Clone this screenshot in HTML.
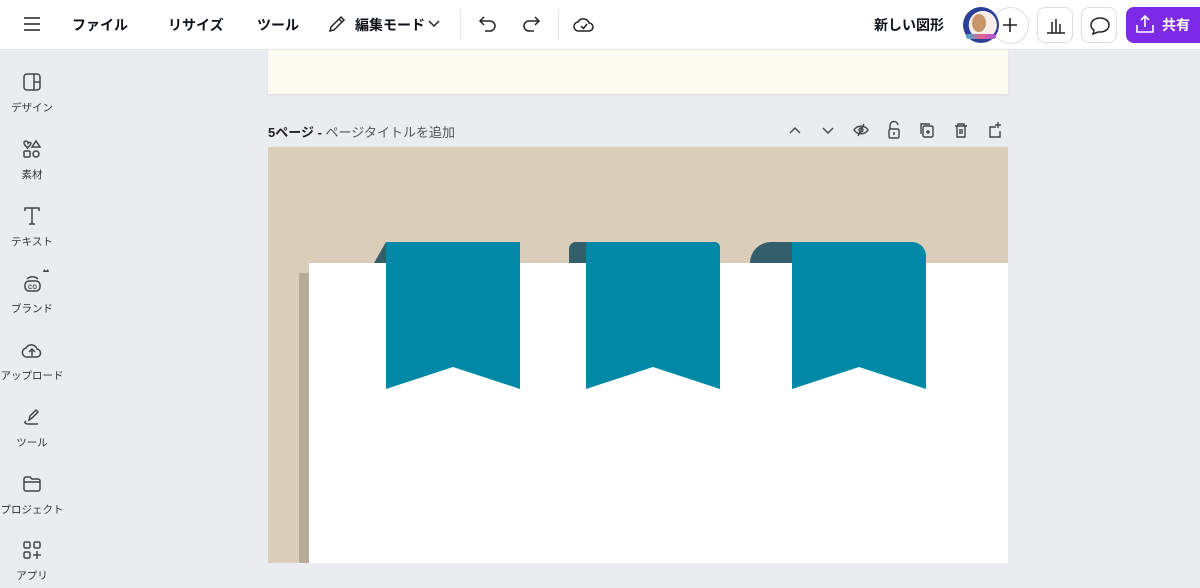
<!DOCTYPE html>
<html><head><meta charset="utf-8"><style>
*{margin:0;padding:0;box-sizing:border-box}
body{width:1200px;height:588px;overflow:hidden;background:#ebecf0;font-family:"Liberation Sans","Noto Sans CJK JP",sans-serif;position:relative;color:#0e1318}
.top{position:absolute;left:0;top:0;width:1200px;height:50px;background:#fff;border-bottom:1px solid #e3e4e8}
.t{position:absolute;top:15px;font-size:14px;font-weight:bold}
.side{position:absolute;left:0;top:50px;width:64px}
.si{position:absolute;left:0;width:64px;text-align:center;font-size:10.5px;color:#333}
.si svg{display:block;margin:0 auto 9px}
.btn{position:absolute;top:7px;width:36px;height:36px;border:1px solid #dcdde1;border-radius:8px;background:#fff}
svg{overflow:visible}
</style></head><body>
<div class="top">
<svg style="position:absolute;left:24px;top:17px" width="16" height="14"><path d="M0 1H16M0 7H16M0 13H16" stroke="#222" stroke-width="1.6"/></svg>
<div class="t" style="left:72px">ファイル</div>
<div class="t" style="left:168px">リサイズ</div>
<div class="t" style="left:257px">ツール</div>
<svg style="position:absolute;left:328px;top:15px" width="18" height="18" fill="none" stroke="#222" stroke-width="1.5"><path d="M2 16L3 12L13 2L16 5L6 15Z M11 4L14 7"/></svg>
<div class="t" style="left:355px">編集モード</div>
<svg style="position:absolute;left:429px;top:21px" width="10" height="6" fill="none" stroke="#222" stroke-width="1.5"><path d="M0 0L5 5L10 0"/></svg>
<div style="position:absolute;left:460px;top:10px;width:1px;height:30px;background:#e3e4e8"></div>
<svg style="position:absolute;left:479px;top:16px" width="18" height="16" fill="none" stroke="#222" stroke-width="1.5"><path d="M5 1L1 5L5 9M1 5H11A5 5 0 0 1 11 15H6"/></svg>
<svg style="position:absolute;left:522px;top:16px" width="18" height="16" fill="none" stroke="#222" stroke-width="1.5"><path d="M13 1L17 5L13 9M17 5H7A5 5 0 0 0 7 15H12"/></svg>
<div style="position:absolute;left:558px;top:10px;width:1px;height:30px;background:#e3e4e8"></div>
<svg style="position:absolute;left:574px;top:15px" width="20" height="18" fill="none" stroke="#222" stroke-width="1.5"><path d="M5 16H15A4 4 0 0 0 15 8A6 6 0 0 0 4 7A4.5 4.5 0 0 0 5 16Z M7 11L9.5 13.5L13 9"/></svg>
<div class="t" style="left:874px">新しい図形</div>
<div style="position:absolute;left:992px;top:7px;width:37px;height:37px;border-radius:50%;border:1px solid #dcdde1;background:#fff"></div>
<svg style="position:absolute;left:1003px;top:18px" width="14" height="14"><path d="M7 0V14M0 7H14" stroke="#222" stroke-width="1.6"/></svg>
<div style="position:absolute;left:963px;top:7px;width:36px;height:36px;border-radius:50%;background:radial-gradient(circle at 55% 50%,#f6ede6 0 52%,#2a3f95 53%)"></div>
<div style="position:absolute;left:972px;top:14px;width:14px;height:18px;border-radius:50%;background:#c8956b"></div>
<div style="position:absolute;left:966px;top:34px;width:30px;height:5px;border-radius:3px;background:linear-gradient(90deg,#34b0d6,#e8608c,#a45ad8)"></div>
<div class="btn" style="left:1037px"><svg style="position:absolute;left:9px;top:10px" width="18" height="16" fill="none" stroke="#222" stroke-width="1.5"><path d="M0 15H18M5 4V15M9 1V15M13 6V15"/></svg></div>
<div class="btn" style="left:1081px"><svg style="position:absolute;left:8px;top:9px" width="20" height="18" fill="none" stroke="#222" stroke-width="1.5"><path d="M10 1C5 1 1 4 1 8C1 10 2 12 4 13L3 17L8 15C9 15 9.5 15 10 15C15 15 19 12 19 8C19 4 15 1 10 1Z"/></svg></div>
<div style="position:absolute;left:1126px;top:7px;width:74px;height:36px;border-radius:8px 0 0 8px;background:#7d2ae8"></div>
<svg style="position:absolute;left:1136px;top:15px" width="18" height="18" fill="none" stroke="#fff" stroke-width="1.6"><path d="M9 12V1M5 5L9 1L13 5M1 10V17H17V10"/></svg>
<div class="t" style="left:1162px;color:#fff">共有</div>
</div>

<div class="side">
<div class="si" style="top:23px"><svg width="18" height="18" fill="none" stroke="#444" stroke-width="1.5"><rect x="1" y="1" width="16" height="16" rx="3"/><path d="M11 1V17M11 9H17"/></svg>デザイン</div>
<div class="si" style="top:90px"><svg width="18" height="18" fill="none" stroke="#444" stroke-width="1.5"><path d="M1 3A2 2 0 0 1 5 3A2 2 0 0 1 8 3C8 5 5 7 4.5 8C4 7 1 5 1 3Z M13 1L17 7H9Z"/><rect x="1" y="11" width="6" height="6" rx="1"/><circle cx="13" cy="14" r="3"/></svg>素材</div>
<div class="si" style="top:157px"><svg width="18" height="18" fill="none" stroke="#444" stroke-width="1.5"><path d="M2 4V1H16V4M9 1V17M6 17H12"/></svg>テキスト</div>
<div class="si" style="top:224px"><svg width="18" height="18" fill="none" stroke="#444" stroke-width="1.5"><rect x="2" y="7" width="15" height="10" rx="4"/><path d="M4 5C7 2 12 2 15 5"/><text x="5" y="15" font-size="6" fill="#444" stroke="none" font-weight="bold">CO</text><path d="M20 -2L21 -5L23 -3L25 -5L26 -2Z" fill="#444" stroke="none"/></svg>ブランド</div>
<div class="si" style="top:291px"><svg width="20" height="18" fill="none" stroke="#444" stroke-width="1.5"><path d="M6 16H14A4 4 0 0 0 15 8A6 6 0 0 0 4 7A4.5 4.5 0 0 0 6 16Z M10 15V9M7 11L10 8L13 11"/></svg>アップロード</div>
<div class="si" style="top:358px"><svg width="18" height="18" fill="none" stroke="#444" stroke-width="1.5"><path d="M6 12L7 8L13 2L15 4L9 10Z M3 13C1 14 2 16 5 16H15"/></svg>ツール</div>
<div class="si" style="top:425px"><svg width="18" height="18" fill="none" stroke="#444" stroke-width="1.5"><path d="M1 4A2 2 0 0 1 3 2H7L9 4H15A2 2 0 0 1 17 6V14A2 2 0 0 1 15 16H3A2 2 0 0 1 1 14Z M1 7H17"/></svg>プロジェクト</div>
<div class="si" style="top:491px"><svg width="18" height="18" fill="none" stroke="#444" stroke-width="1.5"><rect x="1" y="1" width="6" height="6" rx="1.5"/><rect x="11" y="1" width="6" height="6" rx="1.5"/><rect x="1" y="11" width="6" height="6" rx="1.5"/><path d="M14 10V18M10 14H18"/></svg>アプリ</div>
</div>

<div style="position:absolute;left:268px;top:50px;width:740px;height:44px;background:#fefcf1;box-shadow:0 1px 2px rgba(0,0,0,.08)"></div>

<div style="position:absolute;left:268px;top:122px;font-size:13px;color:#555"><b style="color:#222">5ページ - </b>ページタイトルを追加</div>
<svg style="position:absolute;left:790px;top:120px" width="220" height="20" fill="none" stroke="#444" stroke-width="1.4">
<path d="M0 13L5 8L10 13"/><path d="M33 8L38 13L43 8"/>
<path d="M64 10C67 5 75 5 78 10C75 15 67 15 64 10Z M74 4L68 16"/><circle cx="71" cy="10" r="2"/>
<path d="M100 9V6A4 4 0 0 1 108 5"/><rect x="99" y="9" width="10" height="9" rx="1.5"/><path d="M104 12V15"/>
<rect x="133" y="6" width="10" height="11" rx="1.5"/><path d="M131 14V4H140M138 10V14M136 12H140"/>
<path d="M165 6H177M168 6V4H174V6M167 6V17H175V6M170 9V14M172 9V14"/>
<path d="M206 7H200V17H210V11M208 2V8M205 5H211"/>
</svg>

<div style="position:absolute;left:268px;top:147px;width:740px;height:416px;background:#dacdb9;overflow:hidden">
<div style="position:absolute;left:31px;top:126px;width:12px;height:300px;background:#b6aa99"></div>
<div style="position:absolute;left:41px;top:116px;width:700px;height:310px;background:#fff"></div>
<svg style="position:absolute;left:0;top:0" width="740" height="416">
<path d="M106 116L118 95V116Z" fill="#335e6b"/>
<path d="M118 95H252V242L185 220L118 242Z" fill="#0088a7"/>
<path d="M301 116V102A7 7 0 0 1 308 95H318V116Z" fill="#335e6b"/>
<path d="M318 95H447A5 5 0 0 1 452 100V242L385 220L318 242Z" fill="#0088a7"/>
<path d="M482 116A21 21 0 0 1 503 95H524V116Z" fill="#335e6b"/>
<path d="M524 95H644A14 14 0 0 1 658 109V242L591 220L524 242Z" fill="#0088a7"/>
</svg>
</div>
</body></html>
